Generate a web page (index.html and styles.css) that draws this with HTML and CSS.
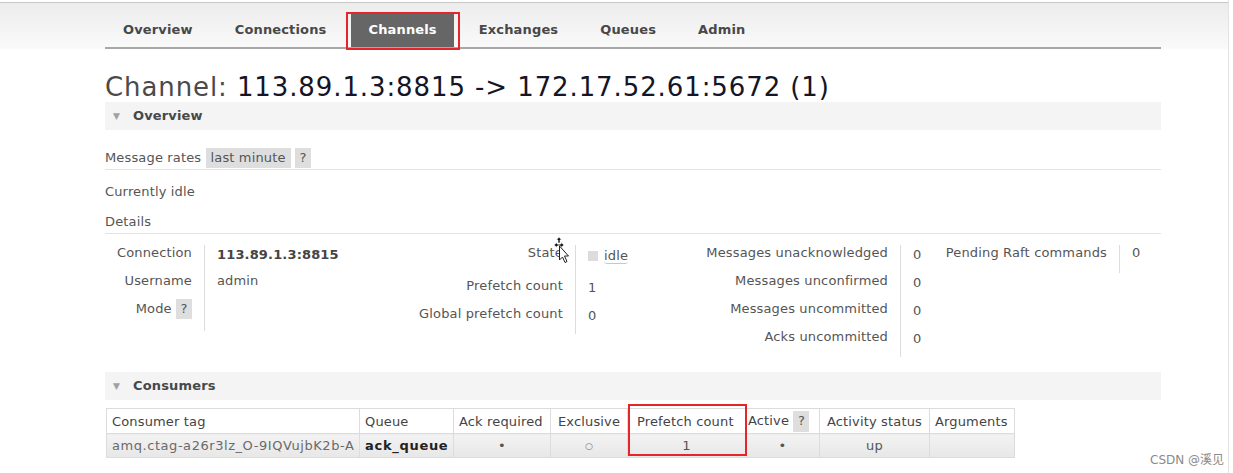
FILE: index.html
```html
<!DOCTYPE html>
<html>
<head>
<meta charset="utf-8">
<link rel="stylesheet" href="styles.css">
</head>
<body>
<div class="page">
  <div class="topline"></div>
  <div class="header">
    <ul class="nav">
      <li>Overview</li>
      <li>Connections</li>
      <li class="active">Channels</li>
      <li>Exchanges</li>
      <li>Queues</li>
      <li>Admin</li>
    </ul>
  </div>
  <div class="main">
    <h1><span class="pre">Channel:</span> <b>113.89.1.3:8815 -&gt; 172.17.52.61:5672 (1)</b></h1>
    <div class="section-h"><span class="tri">&#9660;</span>Overview</div>
    <div class="rates">Message rates <span class="box">last minute</span> <span class="box q">?</span></div>
    <div class="para">Currently idle</div>
    <div class="para details">Details</div>
    <div class="facts">
      <div class="block b1">
        <div class="k">Connection</div><div class="v strong">113.89.1.3:8815</div>
        <div class="k">Username</div><div class="v">admin</div>
        <div class="k">Mode <span class="box q">?</span></div><div class="v"></div>
      </div>
      <div class="block b2">
        <div class="k">State</div><div class="v state"><span class="sq"></span><span class="idle">idle</span></div>
        <div class="k">Prefetch count</div><div class="v low">1</div>
        <div class="k">Global prefetch count</div><div class="v low">0</div>
      </div>
      <div class="block b3">
        <div class="k">Messages unacknowledged</div><div class="v low">0</div>
        <div class="k">Messages unconfirmed</div><div class="v low">0</div>
        <div class="k">Messages uncommitted</div><div class="v low">0</div>
        <div class="k">Acks uncommitted</div><div class="v low">0</div>
      </div>
      <div class="block b4">
        <div class="k">Pending Raft commands</div><div class="v">0</div>
      </div>
    </div>
    <div class="section-h cons"><span class="tri">&#9660;</span>Consumers</div>
    <table class="list">
      <colgroup>
        <col class="w1"><col class="w2"><col class="w3"><col class="w4"><col class="w5"><col class="w6"><col class="w7"><col class="w8">
      </colgroup>
      <tr>
        <th>Consumer tag</th><th>Queue</th><th>Ack required</th><th class="exc">Exclusive</th><th class="ctr">Prefetch count</th><th class="act">Active <span class="box q">?</span></th><th class="ast">Activity status</th><th>Arguments</th>
      </tr>
      <tr>
        <td class="tag">amq.ctag-a26r3lz_O-9IQVujbK2b-A</td><td class="qn">ack_queue</td><td>&#8226;</td><td class="small">&#9675;</td><td>1</td><td>&#8226;</td><td>up</td><td></td>
      </tr>
    </table>
  </div>
  <div class="mark mark-tab"></div>
  <div class="mark mark-col"></div>
  <svg class="cursor" width="22" height="28" viewBox="0 0 22 28">
    <g fill="#111" stroke="#fff" stroke-width="0.6">
      <path d="M6 1 L8.5 4 L7 4 L7 7 L5 7 L5 4 L3.5 4 Z"/>
      <path d="M1 9 L4 6.5 L4 8 L6 8 L6 10 L4 10 L4 11.5 Z"/>
      <path d="M11 9 L8 6.5 L8 8 L6 8 L6 10 L8 10 L8 11.5 Z"/>
    </g>
    <path d="M6.5 10 L6.5 24 L9.5 21 L12 26.5 L14 25.5 L11.5 20 L15.5 20 Z" fill="#fff" stroke="#222" stroke-width="1"/>
  </svg>
  <div class="watermark">CSDN @溪见</div>
</div>
</body>
</html>
```

FILE: styles.css
```css
html, body {
  margin: 0;
  padding: 0;
  background: #fff;
}
body {
  font-family: "DejaVu Sans", Verdana, sans-serif;
  font-size: 13px;
  color: #555;
  letter-spacing: 0.15px;
}
.page {
  position: relative;
  width: 1228px;
  height: 473px;
  border-right: 1px solid #e2e2e2;
  overflow: hidden;
}
.topline {
  height: 1px;
  margin-top: 2px;
  background: #c8c8c8;
}
.header {
  padding-top: 10px;
  background: linear-gradient(#ececec, #fbfbfb 48px, #fff);
}
.nav {
  list-style: none;
  margin: 0 0 0 105px;
  padding: 0;
  width: 1056px;
  display: flex;
  border-bottom: 2px solid #a8a8a8;
}
.nav li {
  height: 34px;
  line-height: 34px;
  padding: 0 21px;
  font-weight: bold;
  color: #484848;
  letter-spacing: 0.15px;
}
.nav li:first-child {
  padding-left: 18px;
}
.nav li.active {
  background: #666;
  color: #fff;
  padding: 0 17px;
  margin: 0 4px;
}
.main {
  margin-left: 105px;
  width: 1056px;
}
h1 {
  margin: 23px 0 0;
  font-size: 26px;
  line-height: 30px;
  font-weight: normal;
  color: #4a4a4a;
  letter-spacing: 0.9px;
}
h1 b {
  font-weight: normal;
  color: #151525;
}
.section-h {
  height: 28px;
  line-height: 28px;
  background: #f4f4f4;
  font-weight: bold;
  color: #484848;
  padding-left: 8px;
}
.tri {
  display: inline-block;
  font-size: 9px;
  color: #a0a0a0;
  width: 20px;
  vertical-align: top;
}
.rates {
  margin-top: 18px;
  height: 21px;
  line-height: 20px;
  border-bottom: 1px solid #e4e4e4;
}
.box {
  display: inline-block;
  background: #dedede;
  padding: 0 4px;
  height: 20px;
  line-height: 20px;
  color: #555;
}
.rates .box {
  padding: 0 5px;
}
.box.q {
  width: 8px;
  padding: 0 4px;
  text-align: center;
}
.para {
  margin-top: 14px;
  line-height: 16px;
}
.details {
  padding-bottom: 3px;
  border-bottom: 1px solid #e2e2e2;
}
.facts {
  display: flex;
  margin-top: 11px;
}
.block {
  display: grid;
  align-content: start;
}
.b1 { grid-template-columns: 99px 196px; }
.b2 { grid-template-columns: 175px 115px; }
.b3 { grid-template-columns: 210px 32px; }
.b4 { grid-template-columns: 187px 42px; }
.k {
  text-align: right;
  padding: 0 12px 12px 0;
  line-height: 16px;
  white-space: nowrap;
}
.k .box.q {
  height: 20px;
  margin-top: -2px;
  vertical-align: top;
}
.v {
  border-left: 1px solid #dcdcdc;
  padding: 0 0 12px 12px;
  line-height: 16px;
  white-space: nowrap;
}
.v.low {
  padding-top: 2px;
  padding-bottom: 10px;
}
.v.strong {
  font-weight: bold;
  color: #444;
  padding-top: 2px;
  padding-bottom: 10px;
}
.v.state {
  padding-top: 3px;
  padding-bottom: 14px;
}
.sq {
  display: inline-block;
  width: 10px;
  height: 10px;
  background: #dcdcdc;
  margin-right: 6px;
  vertical-align: -1px;
}
.idle {
  border-bottom: 1px solid #c8c8c8;
  border-radius: 0 0 3px 3px;
}
.cons {
  margin-top: 15px;
}
table.list {
  margin: 8px 0 0 1px;
  border-collapse: collapse;
  table-layout: fixed;
  width: 908px;
}
.w1 { width: 253px; }
.w2 { width: 94px; }
.w3 { width: 97px; }
.w4 { width: 77px; }
.w5 { width: 118px; }
.w6 { width: 74px; }
.w7 { width: 110px; }
.w8 { width: 85px; }
table.list th {
  height: 24px;
  padding: 0 5px;
  border: 1px solid #dcdcdc;
  background: #fff;
  font-weight: normal;
  text-align: left;
  color: #444;
  white-space: nowrap;
}
table.list th.exc {
  padding-left: 7px;
}
table.list th.ctr {
  padding-left: 9px;
}
table.list th.act {
  padding-left: 2px;
}
table.list th.ast {
  padding-left: 7px;
}
table.list th .box.q {
  height: 21px;
  vertical-align: middle;
}
table.list td {
  height: 23px;
  padding: 0 5px;
  border: 1px solid #dcdcdc;
  background: linear-gradient(#f3f3f3, #e7e7e7);
  text-align: center;
  color: #555;
  white-space: nowrap;
}
table.list td.tag {
  text-align: left;
  color: #6a6a6a;
  letter-spacing: 0.55px;
}
table.list td.qn {
  text-align: left;
  font-weight: bold;
  color: #222;
  letter-spacing: 0.7px;
}
table.list td.small {
  font-size: 9px;
  color: #777;
}
.mark {
  position: absolute;
  border: 2px solid #e4262a;
  box-sizing: border-box;
}
.mark-tab {
  left: 346px;
  top: 12px;
  width: 114px;
  height: 38px;
}
.mark-col {
  left: 628px;
  top: 404px;
  width: 119px;
  height: 52px;
}
.cursor {
  position: absolute;
  left: 553px;
  top: 236px;
}
.watermark {
  position: absolute;
  left: 1150px;
  top: 450px;
  font-family: "DejaVu Sans", "Noto Sans CJK SC", sans-serif;
  font-size: 12px;
  color: #8a8a8a;
  letter-spacing: 0;
}
```
